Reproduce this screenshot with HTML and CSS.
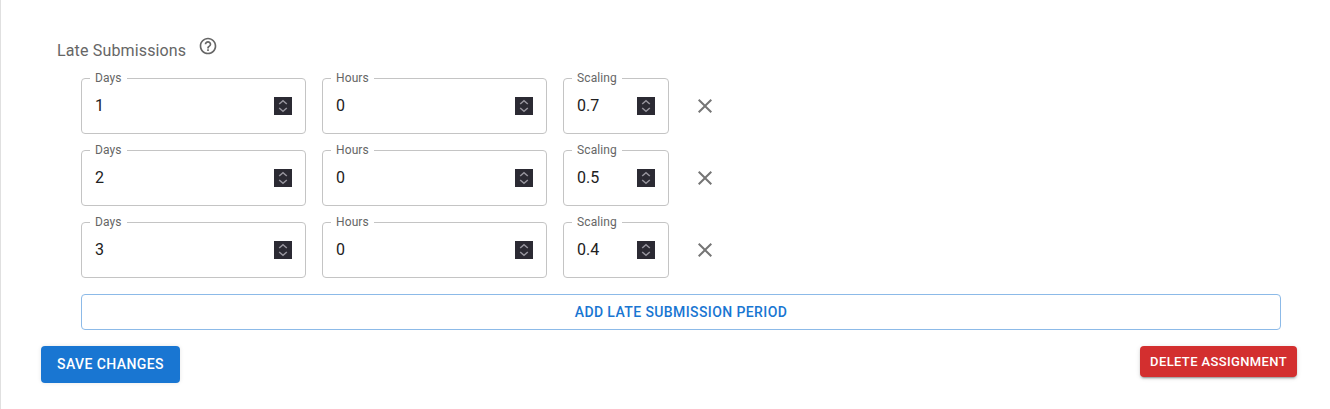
FILE: index.html
```html
<!DOCTYPE html>
<html lang="en">
<head>
<meta charset="utf-8">
<title>Assignment settings</title>
<link rel="stylesheet" href="styles.css">
</head>
<body>
<svg width="0" height="0" class="sprites">
  <symbol id="spin" viewBox="0 0 18 18"><path d="M5.2 7 9 3.7 12.8 7M5.2 11 9 14.3 12.8 11" fill="none" stroke="#96949d" stroke-width="1.5"/></symbol>
  <symbol id="close" viewBox="0 0 24 24"><path fill="#757575" d="M19 6.41 17.59 5 12 10.59 6.41 5 5 6.41 10.59 12 5 17.59 6.41 19 12 13.41 17.59 19 19 17.59 13.41 12z"/></symbol>
</svg>
<main class="panel">
  <div class="heading">
    <span class="title">Late Submissions</span>
    <svg class="help" viewBox="0 0 24 24"><path fill="#666" d="M11 18h2v-2h-2v2zm1-16C6.48 2 2 6.48 2 12s4.48 10 10 10 10-4.48 10-10S17.52 2 12 2zm0 18c-4.41 0-8-3.59-8-8s3.59-8 8-8 8 3.59 8 8-3.59 8-8 8zm0-14c-2.21 0-4 1.79-4 4h2c0-1.1.9-2 2-2s2 .9 2 2c0 2-3 1.75-3 5h2c0-2.25 3-2.5 3-5 0-2.21-1.79-4-4-4z"/></svg>
  </div>
  <div class="periods">
    <div class="row">
      <div class="field"><span class="label">Days</span><span class="value">1</span><svg class="spin"><use href="#spin"/></svg></div>
      <div class="field"><span class="label">Hours</span><span class="value">0</span><svg class="spin"><use href="#spin"/></svg></div>
      <div class="field small"><span class="label">Scaling</span><span class="value">0.7</span><svg class="spin"><use href="#spin"/></svg></div>
      <svg class="close"><use href="#close"/></svg>
    </div>
    <div class="row">
      <div class="field"><span class="label">Days</span><span class="value">2</span><svg class="spin"><use href="#spin"/></svg></div>
      <div class="field"><span class="label">Hours</span><span class="value">0</span><svg class="spin"><use href="#spin"/></svg></div>
      <div class="field small"><span class="label">Scaling</span><span class="value">0.5</span><svg class="spin"><use href="#spin"/></svg></div>
      <svg class="close"><use href="#close"/></svg>
    </div>
    <div class="row">
      <div class="field"><span class="label">Days</span><span class="value">3</span><svg class="spin"><use href="#spin"/></svg></div>
      <div class="field"><span class="label">Hours</span><span class="value">0</span><svg class="spin"><use href="#spin"/></svg></div>
      <div class="field small"><span class="label">Scaling</span><span class="value">0.4</span><svg class="spin"><use href="#spin"/></svg></div>
      <svg class="close"><use href="#close"/></svg>
    </div>
    <button class="btn add">ADD LATE SUBMISSION PERIOD</button>
  </div>
  <div class="actions">
    <button class="btn save">SAVE CHANGES</button>
    <button class="btn delete">DELETE ASSIGNMENT</button>
  </div>
</main>
</body>
</html>
```
FILE: styles.css
```css
* { box-sizing: border-box; }
body { margin: 0; background: #fff; font-family: Roboto, sans-serif; overflow: hidden; }
.sprites { position: absolute; }
.panel { height: 409px; border-left: 1px solid #e0e0e0; padding: 36px 33px 0 40px; }
.heading { display: flex; height: 42px; padding-left: 16px; }
.title { font-size: 16px; line-height: 24px; letter-spacing: 0.15008px; color: #666; margin-top: 3px; }
.help { width: 20px; height: 20px; margin-left: 12px; }
.periods { display: flex; flex-direction: column; gap: 16px; padding: 0 16px 0 40px; }
.row { display: flex; gap: 16px; align-items: center; }
.field { position: relative; width: 225px; height: 56px; border: 1px solid #c4c4c4; border-radius: 4px; padding: 0 13px; display: flex; align-items: center; justify-content: space-between; }
.field.small { width: 106px; }
.label { position: absolute; left: 8px; top: -10px; padding: 0 5px; background: #fff; font-size: 12px; line-height: 18px; letter-spacing: 0.1126px; color: #666; }
.value { font-size: 16px; line-height: 23px; color: #212121; margin-top: -1px; }
.spin { width: 18px; height: 18px; background: #2b2a33; }
.close { width: 24px; height: 24px; margin-left: 8px; }
.btn { font-family: inherit; font-size: 14px; font-weight: 500; line-height: 24.5px; letter-spacing: 0.4px; padding: 6px 16px; border: 0; border-radius: 4px; white-space: nowrap; }
.add { height: 36px; padding: 0 16px; background: #fff; color: #1976d2; border: 1px solid #8cbae8; }
.actions { display: flex; justify-content: space-between; align-items: flex-start; margin-top: 16px; }
.save { color: #fff; background: #1976d2; letter-spacing: 0.42px; box-shadow: 0 0 4px rgba(0, 0, 0, 0.1); }
.delete { color: #fff; background: #d32f2f; font-size: 13px; line-height: 22px; letter-spacing: 0.371px; padding: 5px 10px 4px; box-shadow: 0 3px 1px -2px rgba(0,0,0,.2), 0 2px 2px rgba(0,0,0,.14), 0 1px 5px rgba(0,0,0,.12); }
```
